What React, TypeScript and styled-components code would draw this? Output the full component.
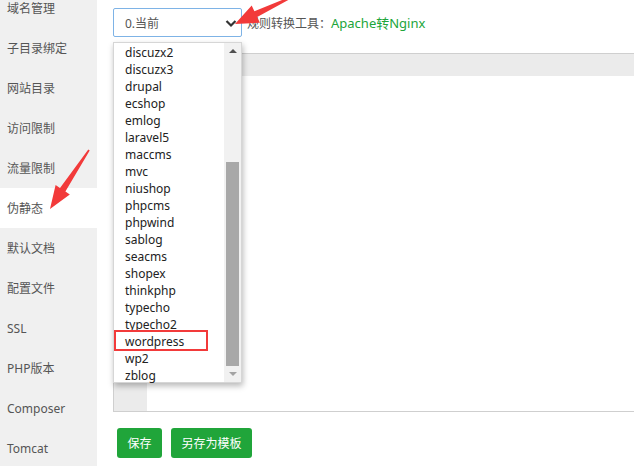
import React from "react";
import styled, { createGlobalStyle } from "styled-components";

const Global = createGlobalStyle`
  html, body { margin: 0; padding: 0; background: #fff; overflow: hidden; }
  body { font-family: "Noto Sans", "Noto Sans CJK SC", sans-serif; }
  * { box-sizing: border-box; }
`;

const cjk = `"Noto Sans", "Noto Sans CJK SC", sans-serif`;

const Page = styled.div`
  position: relative;
  display: flex;
  width: 634px;
  height: 466px;
  overflow: hidden;
  font-family: ${cjk};
`;

const Sidebar = styled.ul`
  list-style: none;
  margin: 0;
  padding: 0;
  width: 97px;
  flex: none;
  background: #f0f0f0;
  display: flex;
  flex-direction: column;
`;

const SideItem = styled.li<{ $active?: boolean; $first?: boolean }>`
  height: 40px;
  line-height: 41px;
  padding-left: 7px;
  font-size: 12px;
  color: #555;
  background: ${(p) => (p.$active ? "#fff" : "transparent")};
  margin-top: ${(p) => (p.$first ? "-12px" : "0")};
  white-space: nowrap;
`;

const Main = styled.div`
  flex: 1;
  padding: 8px 0 0 16px;
  display: flex;
  flex-direction: column;
`;

const TopRow = styled.div`
  display: flex;
  align-items: center;
  height: 29px;
`;

const SelectWrap = styled.div`
  position: relative;
  width: 129px;
  height: 29px;
`;

const SelectBox = styled.div`
  height: 29px;
  border: 1px solid #7eb3e6;
  border-radius: 2px;
  display: flex;
  align-items: center;
  justify-content: space-between;
  padding: 0 4px 0 11px;
  font-size: 12px;
  color: #555;
  background: #fff;
`;

const Label = styled.span`
  margin-left: 5px;
  font-size: 12px;
  color: #555;
  white-space: nowrap;
`;

const Link = styled.span`
  color: #20a53a;
  font-size: 13px;
`;

const Editor = styled.div`
  margin-top: 16px;
  height: 359px;
  border: 1px solid #cfcfcf;
  border-right: none;
  display: flex;
  position: relative;
  background: #fff;
`;

const Gutter = styled.div`
  width: 33px;
  background: #ebebeb;
`;

const ActiveLine = styled.div`
  position: absolute;
  left: 0;
  right: 0;
  top: 0;
  height: 22px;
  background: #ebebeb;
`;

const Buttons = styled.div`
  display: flex;
  gap: 9px;
  margin-top: 16px;
  padding-left: 4px;
`;

const Button = styled.button`
  height: 30px;
  padding: 0 10.5px;
  border: none;
  border-radius: 3px;
  background: #20a53a;
  color: #fff;
  font-family: ${cjk};
  font-size: 12px;
`;

const Dropdown = styled.div`
  position: absolute;
  left: 0;
  top: 34px;
  width: 129px;
  height: 341px;
  background: #fff;
  border: 1px solid #d6d6d6;
  box-shadow: 1px 3px 6px rgba(0, 0, 0, 0.28);
  display: flex;
  z-index: 5;
`;

const OptionList = styled.ul`
  list-style: none;
  margin: 0;
  padding: 1px 0 0;
  flex: 1;
`;

const Option = styled.li`
  height: 17px;
  line-height: 17px;
  padding-left: 11px;
  font-size: 12px;
  color: #222;
  position: relative;
`;

const Marked = styled.span`
  position: absolute;
  left: 0;
  top: -3px;
  width: 94px;
  height: 21px;
  border: 2px solid #f23a3a;
`;

const ScrollTrack = styled.div`
  width: 17px;
  background: #f1f1f1;
  display: flex;
  flex-direction: column;
  align-items: center;
`;

const ScrollArrow = styled.div<{ $down?: boolean }>`
  height: 17px;
  display: flex;
  align-items: center;
  justify-content: center;
  &::after {
    content: "";
    border-left: 4px solid transparent;
    border-right: 4px solid transparent;
    ${(p) =>
      p.$down
        ? "border-top: 4px solid #a3a3a3;"
        : "border-bottom: 4px solid #505050;"}
  }
`;

const ScrollSpace = styled.div`
  flex: 1;
  width: 100%;
  display: flex;
  flex-direction: column;
  align-items: center;
`;

const Thumb = styled.div`
  margin-top: 102px;
  width: 13px;
  height: 204px;
  background: #a8a8a8;
`;

const Overlay = styled.svg`
  position: absolute;
  left: 0;
  top: 0;
  pointer-events: none;
  z-index: 10;
`;

const sideItems = [
  "域名管理",
  "子目录绑定",
  "网站目录",
  "访问限制",
  "流量限制",
  "伪静态",
  "默认文档",
  "配置文件",
  "SSL",
  "PHP版本",
  "Composer",
  "Tomcat",
];

const options = [
  "discuzx2",
  "discuzx3",
  "drupal",
  "ecshop",
  "emlog",
  "laravel5",
  "maccms",
  "mvc",
  "niushop",
  "phpcms",
  "phpwind",
  "sablog",
  "seacms",
  "shopex",
  "thinkphp",
  "typecho",
  "typecho2",
  "wordpress",
  "wp2",
  "zblog",
];

function arrowPoints(sx: number, sy: number, tx: number, ty: number, headLen: number, headHalf: number, shaftStart: number, shaftEnd: number) {
  const dx = tx - sx;
  const dy = ty - sy;
  const len = Math.hypot(dx, dy);
  const ux = dx / len;
  const uy = dy / len;
  const nx = -uy;
  const ny = ux;
  const bx = tx - ux * headLen;
  const by = ty - uy * headLen;
  const pts = [
    [sx + nx * shaftStart, sy + ny * shaftStart],
    [bx + nx * shaftEnd, by + ny * shaftEnd],
    [bx + nx * headHalf, by + ny * headHalf],
    [tx, ty],
    [bx - nx * headHalf, by - ny * headHalf],
    [bx - nx * shaftEnd, by - ny * shaftEnd],
    [sx - nx * shaftStart, sy - ny * shaftStart],
  ];
  return pts.map((p) => p.map((v) => v.toFixed(1)).join(",")).join(" ");
}

export default function App() {
  return (
    <>
      <Global />
      <Page>
        <Sidebar>
          {sideItems.map((s, i) => (
            <SideItem key={s} $first={i === 0} $active={s === "伪静态"}>
              {s}
            </SideItem>
          ))}
        </Sidebar>
        <Main>
          <TopRow>
            <SelectWrap>
              <SelectBox>
                <span>0.当前</span>
                <svg width="12" height="10" viewBox="0 0 12 10">
                  <polyline points="1.5,3 6,7.5 10.5,3" fill="none" stroke="#333" strokeWidth="2.2" />
                </svg>
              </SelectBox>
              <Dropdown>
                <OptionList>
                  {options.map((o) => (
                    <Option key={o}>
                      {o === "wordpress" && <Marked />}
                      {o}
                    </Option>
                  ))}
                </OptionList>
                <ScrollTrack>
                  <ScrollArrow />
                  <ScrollSpace>
                    <Thumb />
                  </ScrollSpace>
                  <ScrollArrow $down />
                </ScrollTrack>
              </Dropdown>
            </SelectWrap>
            <Label>
              规则转换工具：<Link>Apache转Nginx</Link>
            </Label>
          </TopRow>
          <Editor>
            <ActiveLine />
            <Gutter />
          </Editor>
          <Buttons>
            <Button>保存</Button>
            <Button>另存为模板</Button>
          </Buttons>
        </Main>
        <Overlay width="634" height="466" viewBox="0 0 634 466">
          <polygon points={arrowPoints(294, -4, 235, 24, 23, 9.5, 0.8, 3.2)} fill="#f23a3a" />
          <polygon points={arrowPoints(89, 150, 50, 209, 23, 8.5, 0.8, 3.2)} fill="#f23a3a" />
        </Overlay>
      </Page>
    </>
  );
}
